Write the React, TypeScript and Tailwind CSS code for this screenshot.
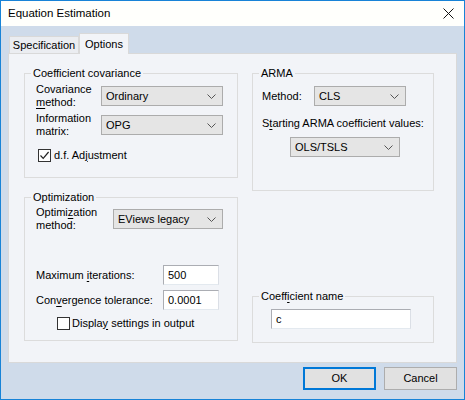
import React from "react";

const U = ({ children }: { children: React.ReactNode }) => (
  <span className="underline underline-offset-[2px] decoration-[1px]">{children}</span>
);

const Chevron = () => (
  <svg width="9" height="5" viewBox="0 0 9 5" className="shrink-0">
    <path d="M0.5 0.5 L4.5 4.5 L8.5 0.5" fill="none" stroke="#555" strokeWidth="1" />
  </svg>
);

const Select = ({ value, w }: { value: string; w: string }) => (
  <div
    className={`${w} h-[20px] bg-[#e5e5e5] border border-[#acacac] flex items-center justify-between pl-[4px] pr-[6px] shrink-0`}
  >
    <span>{value}</span>
    <Chevron />
  </div>
);

const Input = ({ value, w }: { value: string; w: string }) => (
  <div
    className={`${w} h-[20px] bg-white border border-[#abadb3] border-r-[#dbdfe6] border-b-[#e3e9ef] flex items-center pl-[4px] shrink-0`}
  >
    {value}
  </div>
);

const Check = ({ checked }: { checked: boolean }) => (
  <div className="w-[13px] h-[13px] border border-[#333] bg-white flex items-center justify-center shrink-0">
    {checked && (
      <svg width="11" height="11" viewBox="0 0 11 11">
        <path d="M1.5 5.5 L4.2 8.3 L9.6 2" fill="none" stroke="#222" strokeWidth="1.2" />
      </svg>
    )}
  </div>
);

const Legend = ({ children }: { children: React.ReactNode }) => (
  <legend className="ml-[6px] px-[2px] leading-[16px]">{children}</legend>
);

export default function App() {
  return (
    <div
      className="w-[465px] h-[400px] bg-[#cfdbea] border border-[#1883d7] flex flex-col text-[11px] text-black leading-[13px] whitespace-nowrap"
      style={{ fontFamily: '"Liberation Sans", Arial, sans-serif' }}
    >
      {/* title bar */}
      <div className="h-[25px] bg-[#fffffc] flex items-center justify-between pl-[7px] pr-[10px] shrink-0">
        <span className="text-[11.5px]">Equation Estimation</span>
        <svg width="11" height="11" viewBox="0 0 11 11">
          <path d="M0.5 0.5 L10.5 10.5 M10.5 0.5 L0.5 10.5" stroke="#111" strokeWidth="1" />
        </svg>
      </div>

      <div className="flex flex-col px-[7px]">
        {/* tabs */}
        <div className="h-[27px] flex items-end pl-[1px]">
          <div className="h-[17px] w-[70px] bg-[#ebedf1] border border-b-0 border-[#d9d9d9] flex items-center justify-center">
            Specification
          </div>
          <div className="relative z-10 h-[21px] w-[50px] mb-[-1px] bg-[#f2f4f8] border border-b-0 border-[#d9d9d9] flex items-start justify-center pt-[4px]">
            Options
          </div>
        </div>

        {/* panel */}
        <div className="h-[310px] bg-[#f2f4f8] border border-[#d9d9d9] flex pl-[15px] pt-[11px] gap-[14px]">
          {/* left column */}
          <div className="w-[214px] flex flex-col">
            <fieldset className="h-[113px] border border-[#dcdcdc]">
              <Legend>Coefficient covariance</Legend>
              <div className="flex flex-col pl-[11px] pt-[2px]">
                <div className="h-[26px] flex items-center">
                  <div className="w-[65px]">
                    Covariance
                    <br />
                    <U>m</U>ethod:
                  </div>
                  <Select value="Ordinary" w="w-[122px]" />
                </div>
                <div className="h-[26px] flex items-center mt-[3px]">
                  <div className="w-[65px]">
                    Information
                    <br />
                    matrix:
                  </div>
                  <Select value="OPG" w="w-[122px]" />
                </div>
                <div className="h-[16px] flex items-center mt-[9px] pl-[2px] gap-[3px]">
                  <Check checked />
                  <span>
                    d.f. Ad<U>j</U>ustment
                  </span>
                </div>
              </div>
            </fieldset>

            <fieldset className="h-[152px] border border-[#dcdcdc] mt-[11px]">
              <Legend>Optimization</Legend>
              <div className="flex flex-col pl-[11px]">
                <div className="h-[26px] flex items-center mt-[1px]">
                  <div className="w-[77px]">
                    Optimi<U>z</U>ation
                    <br />
                    method:
                  </div>
                  <Select value="EViews legacy" w="w-[110px]" />
                </div>
                <div className="h-[20px] flex items-center mt-[33px]">
                  <div className="w-[127px]">
                    Maximum <U>i</U>terations:
                  </div>
                  <Input value="500" w="w-[56px]" />
                </div>
                <div className="h-[20px] flex items-center mt-[5px]">
                  <div className="w-[127px]">
                    Con<U>v</U>ergence tolerance:
                  </div>
                  <Input value="0.0001" w="w-[56px]" />
                </div>
                <div className="h-[16px] flex items-center mt-[5px] pl-[21px] gap-[2px]">
                  <Check checked={false} />
                  <span>
                    Displa<U>y</U> settings in output
                  </span>
                </div>
              </div>
            </fieldset>
          </div>

          {/* right column */}
          <div className="w-[182px] flex flex-col">
            <fieldset className="h-[126px] border border-[#dcdcdc]">
              <Legend>ARMA</Legend>
              <div className="flex flex-col pl-[9px]">
                <div className="h-[20px] flex items-center mt-[5px]">
                  <div className="w-[52px]">Method:</div>
                  <Select value="CLS" w="w-[92px]" />
                </div>
                <div className="mt-[11px] h-[13px]">
                  S<U>t</U>arting ARMA coefficient values:
                </div>
                <div className="mt-[7px] pl-[28px]">
                  <Select value="OLS/TSLS" w="w-[110px]" />
                </div>
              </div>
            </fieldset>

            <fieldset className="h-[55px] border border-[#dcdcdc] mt-[97px]">
              <Legend>
                Coeff<U>i</U>cient name
              </Legend>
              <div className="pl-[18px] pt-[5px]">
                <Input value="c" w="w-[140px]" />
              </div>
            </fieldset>
          </div>
        </div>

        {/* buttons */}
        <div className="flex justify-end gap-[8px] mt-[4px]">
          <div className="w-[73px] h-[23px] bg-[#e1e1e1] border-2 border-[#0078d7] flex items-center justify-center">
            OK
          </div>
          <div className="w-[73px] h-[23px] bg-[#e1e1e1] border border-[#adadad] flex items-center justify-center">
            Cancel
          </div>
        </div>
      </div>
    </div>
  );
}
